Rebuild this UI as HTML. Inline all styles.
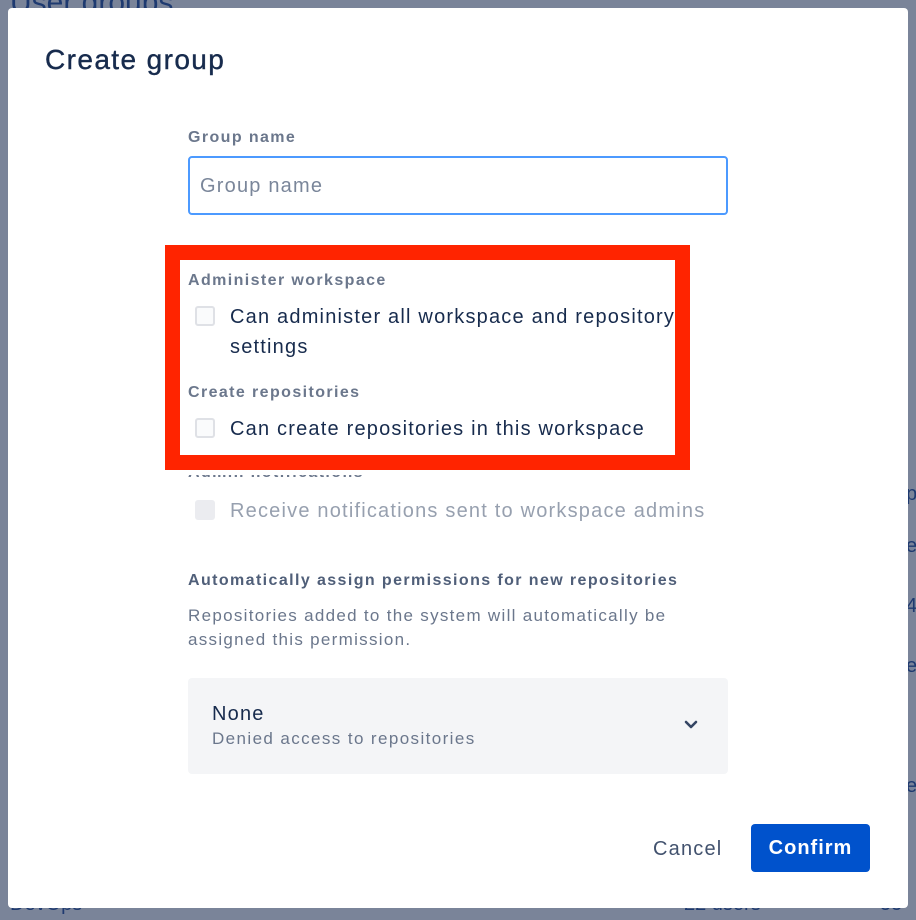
<!DOCTYPE html>
<html><head><meta charset="utf-8">
<style>
*{box-sizing:border-box;margin:0;padding:0}
html,body{width:916px;height:920px;overflow:hidden;background:#7a8499;font-family:"Liberation Sans",sans-serif}
.bg{position:absolute;color:#1e3a70;font-size:20px}
.modal{position:absolute;left:8px;top:8px;width:900px;height:900px;background:#fff;border-radius:4px}
.abs{position:absolute}
h1{position:absolute;left:37px;top:36px;font-size:28px;font-weight:normal;color:#172b4d;letter-spacing:1.4px;-webkit-text-stroke:0.4px #172b4d}
.lbl{position:absolute;font-size:16px;font-weight:bold;color:#6b778c;letter-spacing:1.4px}
.txt{position:absolute;font-size:20px;color:#172b4d;line-height:30px;letter-spacing:1.2px;white-space:nowrap}
.cb{position:absolute;width:20px;height:20px;border:2px solid #dfe1e6;border-radius:3px;background:#fafbfc}
</style></head><body>
<div class="bg" style="left:10px;top:-14px;font-size:30px">User groups</div>
<div class="bg" style="left:10px;top:893px">DevOps</div>
<div class="bg" style="left:684px;top:893px">22 users</div>
<div class="bg" style="left:880px;top:893px">55</div>
<div class="bg" style="left:906px;top:483px">p</div>
<div class="bg" style="left:906px;top:535px">e</div>
<div class="bg" style="left:906px;top:595px">4</div>
<div class="bg" style="left:906px;top:655px">e</div>
<div class="bg" style="left:906px;top:775px">e</div>
<div class="modal">
<h1>Create group</h1>
<div class="lbl" style="left:180px;top:121px">Group name</div>
<div class="abs" style="left:180px;top:148px;width:540px;height:59px;border:2px solid #4c9aff;border-radius:4px;font-size:20px;color:#7a869a;padding:17px 10px;letter-spacing:1.2px">Group name</div>
<div class="abs" style="left:157px;top:237px;width:525px;height:225px;border:15px solid #ff2400"></div>
<div class="lbl" style="left:180px;top:264px">Administer workspace</div>
<div class="cb" style="left:187px;top:298px"></div>
<div class="txt" style="left:222px;top:294px">Can administer all workspace and repository<br>settings</div>
<div class="lbl" style="left:180px;top:376px">Create repositories</div>
<div class="cb" style="left:187px;top:410px"></div>
<div class="txt" style="left:222px;top:406px">Can create repositories in this workspace</div>
<div class="lbl" style="left:180px;top:456px;clip-path:inset(11px 0 0 0)">Admin notifications</div>
<div class="cb" style="left:187px;top:492px;background:#ebecf0;border-color:#ebecf0"></div>
<div class="txt" style="left:222px;top:488px;color:#97a0af">Receive notifications sent to workspace admins</div>
<div class="lbl" style="left:180px;top:564px;color:#505f79">Automatically assign permissions for new repositories</div>
<div class="abs" style="left:180px;top:596px;font-size:17px;color:#6b778c;line-height:24px;letter-spacing:1.3px;white-space:nowrap">Repositories added to the system will automatically be<br>assigned this permission.</div>
<div class="abs" style="left:180px;top:670px;width:540px;height:96px;background:#f4f5f7;border-radius:4px">
<div class="abs" style="left:24px;top:25px;font-size:20px;color:#172b4d;letter-spacing:1.2px">None</div>
<div class="abs" style="left:24px;top:51px;font-size:17px;color:#6b778c;letter-spacing:1.4px">Denied access to repositories</div>
<svg class="abs" style="left:496px;top:42px" width="14" height="10" viewBox="0 0 14 10"><path d="M2 2l5 5 5-5" fill="none" stroke="#344563" stroke-width="2.6" stroke-linecap="round" stroke-linejoin="round"/></svg>
</div>
<div class="abs" style="left:645px;top:830px;font-size:20px;color:#42526e;letter-spacing:1.2px">Cancel</div>
<div class="abs" style="left:743px;top:816px;width:119px;height:48px;background:#0052cc;border-radius:4px;color:#fff;font-size:20px;font-weight:bold;text-align:center;line-height:48px;letter-spacing:1px">Confirm</div>
</div>
</body></html>
